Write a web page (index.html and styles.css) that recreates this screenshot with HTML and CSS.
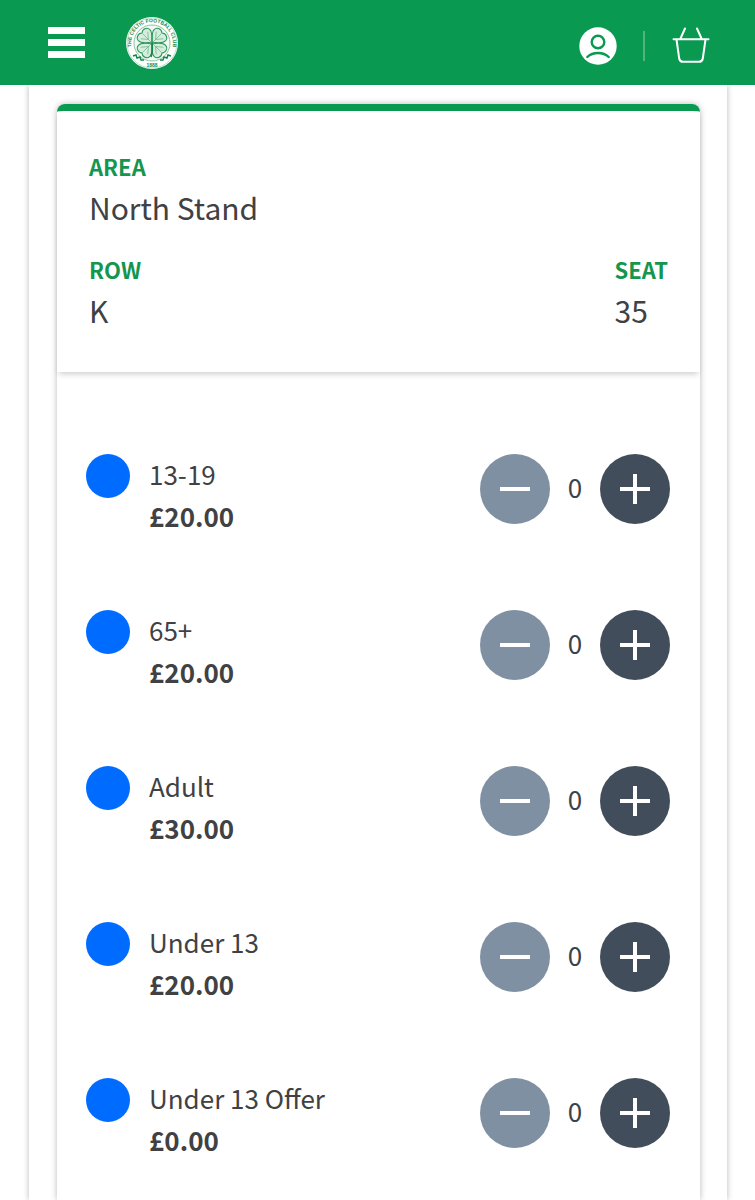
FILE: index.html
```
<!DOCTYPE html>
<html lang="en">
<head>
<meta charset="utf-8">
<meta name="viewport" content="width=device-width, initial-scale=1">
<title>Seat selection</title>
<link rel="stylesheet" href="styles.css">
</head>
<body>
<header class="topbar">
  <button class="icon-button" type="button" aria-label="Menu">
    <svg width="38" height="32" viewBox="0 0 38 32"><path d="M1 0h37v7H1zM1 12h37v7H1zM1 24h37v7H1z" fill="#fff"/></svg>
  </button>
  <a class="crest" href="#" aria-label="The Celtic Football Club">
    <svg width="52" height="54" viewBox="0 0 52 54">
      <defs>
        <path id="ring" d="M9 39A20.8 20.8 0 1 1 43 39"/>
        <g id="leaf">
          <path d="M0 0C-2-4-8-6-8-11C-8-15-3-17 0-14C3-17 8-15 8-11C8-6 2-4 0 0Z" fill="#d5eddd" stroke="#2c945a" stroke-width="1"/>
          <path d="M0-1V-13M0-5L-5-11M0-5L5-11" fill="none" stroke="#6bb587" stroke-width=".7"/>
        </g>
      </defs>
      <circle cx="26" cy="27" r="26" fill="#fff"/>
      <circle cx="26" cy="27" r="25" fill="none" stroke="#8ccba5" stroke-width=".6"/>
      <circle cx="26" cy="27" r="18" fill="#f0f9f3" stroke="#70b98b" stroke-width=".8"/>
      <use href="#leaf" transform="translate(26 27) rotate(45)"/>
      <use href="#leaf" transform="translate(26 27) rotate(135)"/>
      <use href="#leaf" transform="translate(26 27) rotate(225)"/>
      <use href="#leaf" transform="translate(26 27) rotate(315)"/>
      <path d="M26 27Q27 35 25 41" fill="none" stroke="#16874a" stroke-width="1.6"/>
      <path d="M7 40l3-1 1 3 3-1 1 3 3 0M45 40l-3-1-1 3-3-1-1 3-3 0" fill="none" stroke="#16874a" stroke-width="1.5"/>
      <text class="crest-text"><textPath href="#ring" startOffset="50%" text-anchor="middle">THE CELTIC FOOTBALL CLUB</textPath></text>
      <text class="crest-text" x="26" y="51" text-anchor="middle">1888</text>
    </svg>
  </a>
  <nav class="account" aria-label="Account">
    <a class="profile" href="#" aria-label="Profile">
      <svg width="38" height="38" viewBox="0 0 38 38"><circle cx="19" cy="19" r="18.7" fill="#fff"/><circle cx="19" cy="15" r="6.3" fill="none" stroke="#0a9950" stroke-width="2.4"/><path d="M8.3 30Q12.5 26 19 26T29.7 30" fill="none" stroke="#0a9950" stroke-width="2.4" stroke-linecap="round"/></svg>
    </a>
    <span class="divider"></span>
    <a class="basket" href="#" aria-label="Basket">
      <svg width="38" height="37" viewBox="0 0 38 37"><path d="M1.5 12.2H36.5M4.5 12.5L7.2 31.5Q7.7 34.8 11 34.8H27Q30.3 34.8 30.8 31.5L33.5 12.5M8.5 11.5L13 1.5M29.5 11.5L25 1.5" fill="none" stroke="#fff" stroke-width="2" stroke-linecap="round"/></svg>
    </a>
  </nav>
</header>
<main class="panel">
  <article class="card">
    <dl class="place">
      <div class="fact fact-wide"><dt>AREA</dt><dd>North Stand</dd></div>
      <div class="fact"><dt>ROW</dt><dd>K</dd></div>
      <div class="fact"><dt>SEAT</dt><dd>35</dd></div>
    </dl>
    <ul class="prices">
      <li class="price-row"><span class="dot"></span><div class="ticket"><span>13-19</span><strong>£20.00</strong></div>
        <div class="stepper"><button class="step minus" type="button" aria-label="Remove 13-19"></button><output>0</output><button class="step plus" type="button" aria-label="Add 13-19"></button></div></li>
      <li class="price-row"><span class="dot"></span><div class="ticket"><span>65+</span><strong>£20.00</strong></div>
        <div class="stepper"><button class="step minus" type="button" aria-label="Remove 65+"></button><output>0</output><button class="step plus" type="button" aria-label="Add 65+"></button></div></li>
      <li class="price-row"><span class="dot"></span><div class="ticket"><span>Adult</span><strong>£30.00</strong></div>
        <div class="stepper"><button class="step minus" type="button" aria-label="Remove Adult"></button><output>0</output><button class="step plus" type="button" aria-label="Add Adult"></button></div></li>
      <li class="price-row"><span class="dot"></span><div class="ticket"><span>Under 13</span><strong>£20.00</strong></div>
        <div class="stepper"><button class="step minus" type="button" aria-label="Remove Under 13"></button><output>0</output><button class="step plus" type="button" aria-label="Add Under 13"></button></div></li>
      <li class="price-row"><span class="dot"></span><div class="ticket"><span>Under 13 Offer</span><strong>£0.00</strong></div>
        <div class="stepper"><button class="step minus" type="button" aria-label="Remove Under 13 Offer"></button><output>0</output><button class="step plus" type="button" aria-label="Add Under 13 Offer"></button></div></li>
    </ul>
  </article>
</main>
</body>
</html>
```
FILE: styles.css
```
* { box-sizing: border-box; }
body {
  margin: 0;
  background: #fff;
  color: #414143;
  font-family: "Noto Sans CJK SC", "Noto Sans", sans-serif;
}
button { border: 0; padding: 0; background: none; cursor: pointer; }
svg { display: block; }
.topbar {
  position: relative;
  z-index: 1;
  display: flex;
  align-items: center;
  height: 85px;
  padding: 0 45px 0 47px;
  background: #0a9950;
}
.crest { margin-left: 41px; }
.crest-text { font: bold 5px "Liberation Sans", sans-serif; fill: #16874a; }
.account { display: flex; align-items: center; margin-left: auto; padding-top: 6px; }
.divider { width: 2px; height: 30px; margin: 0 27px 0 26px; background: #4eb57f; }
.panel {
  margin: 0 28px 0 29px;
  padding: 19px 27px 0 28px;
  box-shadow: 0 0 6px rgba(0, 0, 0, .28);
}
.card {
  border-top: 7px solid #0a9950;
  border-radius: 8px 8px 0 0;
  box-shadow: 0 0 6px rgba(0, 0, 0, .28);
}
.place {
  display: grid;
  grid-template-columns: 1fr auto;
  row-gap: 21px;
  margin: 0;
  padding: 38px 32px;
  box-shadow: 0 4px 6px -2px rgba(0, 0, 0, .2);
}
.fact-wide { grid-column: 1 / -1; }
dt {
  color: #14964f;
  font-size: 22px;
  font-weight: 700;
  line-height: 34px;
}
dd { margin: 0; font-size: 30px; line-height: 48px; }
.prices {
  display: flex;
  flex-direction: column;
  gap: 72px;
  margin: 0;
  padding: 82px 30px 38px 29px;
  list-style: none;
}
.price-row { display: flex; align-items: flex-start; }
.dot { width: 44px; height: 44px; border-radius: 50%; background: #006cff; }
.ticket { display: flex; flex: 1; flex-direction: column; padding-left: 19px; font-size: 26px; line-height: 42px; }
.ticket span, .ticket strong { height: 42px; line-height: 40px; }
.stepper { display: flex; align-items: center; }
output { width: 50px; height: 70px; font-size: 26px; line-height: 66px; text-align: center; }
.step {
  width: 70px;
  height: 70px;
  border-radius: 50%;
  background-position: center;
  background-repeat: no-repeat;
}
.minus {
  background-color: #8090a3;
  background-image: linear-gradient(#fff, #fff);
  background-size: 30px 4px;
}
.plus {
  background-color: #414d5b;
  background-image: linear-gradient(#fff, #fff), linear-gradient(#fff, #fff);
  background-size: 30px 4px, 4px 30px;
}
```
